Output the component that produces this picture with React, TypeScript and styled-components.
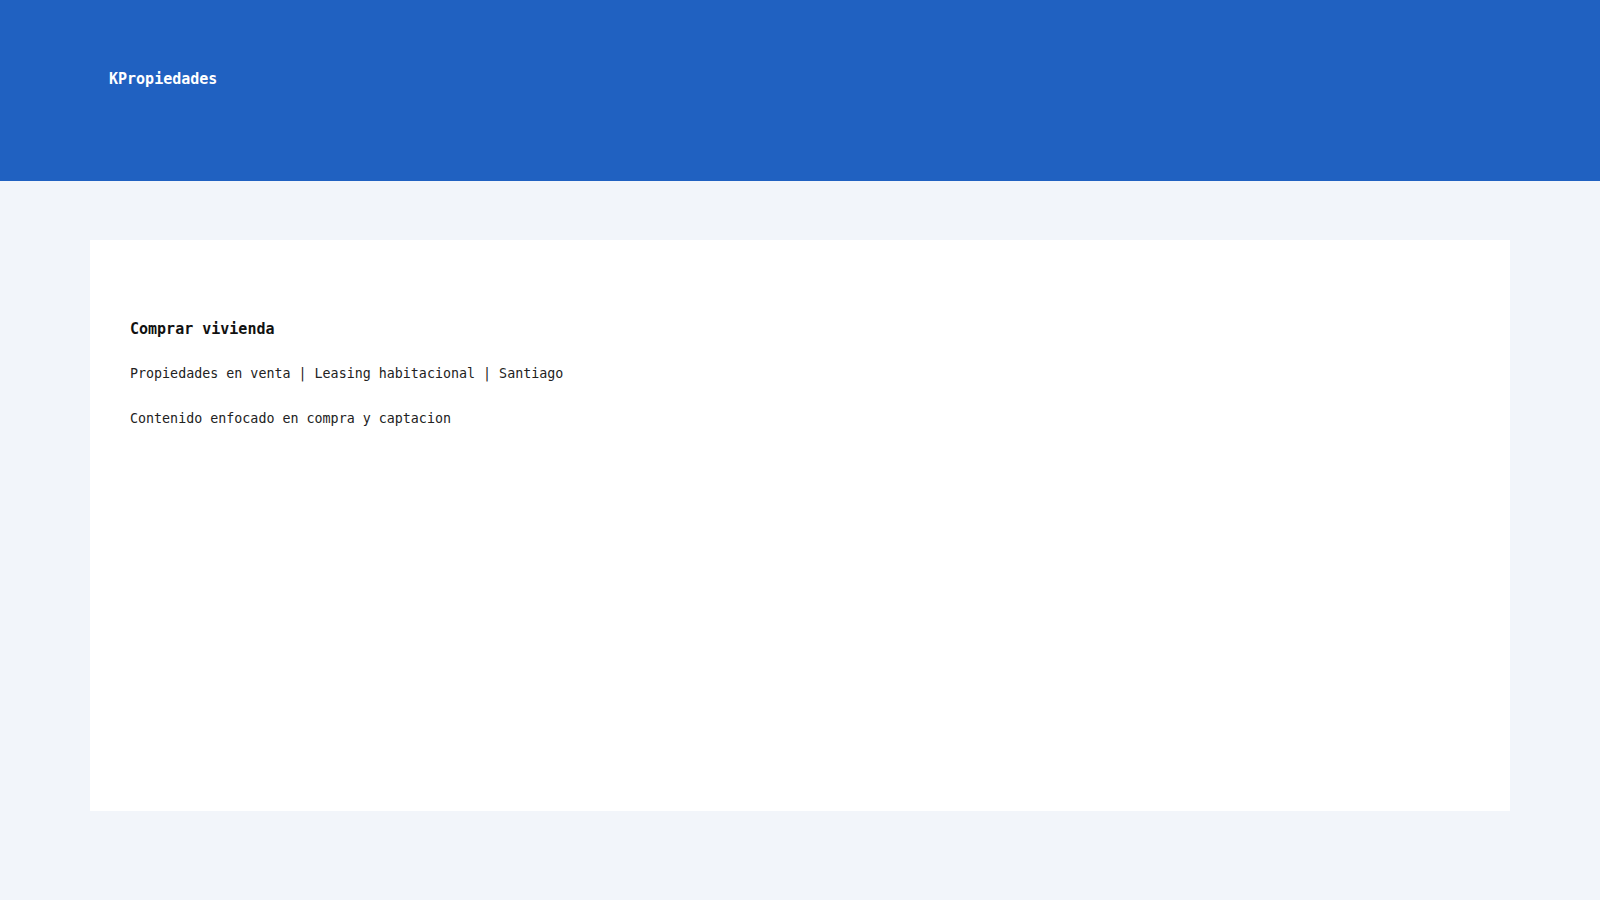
import React from 'react';
import styled, { createGlobalStyle } from 'styled-components';

const GlobalStyle = createGlobalStyle`
  html, body {
    margin: 0;
    padding: 0;
    background: #f2f5fa;
    font-family: "DejaVu Sans Mono", monospace;
  }
`;

function App() {
  return (
    <Wrapper>
      <GlobalStyle />
      <Header>
        <Brand>KPropiedades</Brand>
      </Header>
      <Main>
        <Card>
          <Title>Comprar vivienda</Title>
          <Line>Propiedades en venta | Leasing habitacional | Santiago</Line>
          <Line>Contenido enfocado en compra y captacion</Line>
        </Card>
      </Main>
    </Wrapper>
  );
}

const Wrapper = styled.div`
  min-height: 900px;
  background: #f2f5fa;
`;

const Header = styled.header`
  height: 181px;
  background: #2061c1;
  padding: 0 109px;
  box-sizing: border-box;
`;

const Brand = styled.div`
  padding-top: 70px;
  color: #ffffff;
  font-size: 15px;
  font-weight: bold;
  line-height: 18px;
`;

const Main = styled.main`
  padding: 59px 90px;
`;

const Card = styled.section`
  background: #ffffff;
  height: 571px;
  box-sizing: border-box;
  padding: 80px 40px;
  display: flex;
  flex-direction: column;
  gap: 27px;
`;

const Title = styled.h2`
  margin: 0;
  font-size: 15px;
  font-weight: 600;
  line-height: 18px;
  color: #111;
`;

const Line = styled.p`
  margin: 0;
  font-size: 13.33px;
  line-height: 18px;
  color: #222;
`;

export default App;
